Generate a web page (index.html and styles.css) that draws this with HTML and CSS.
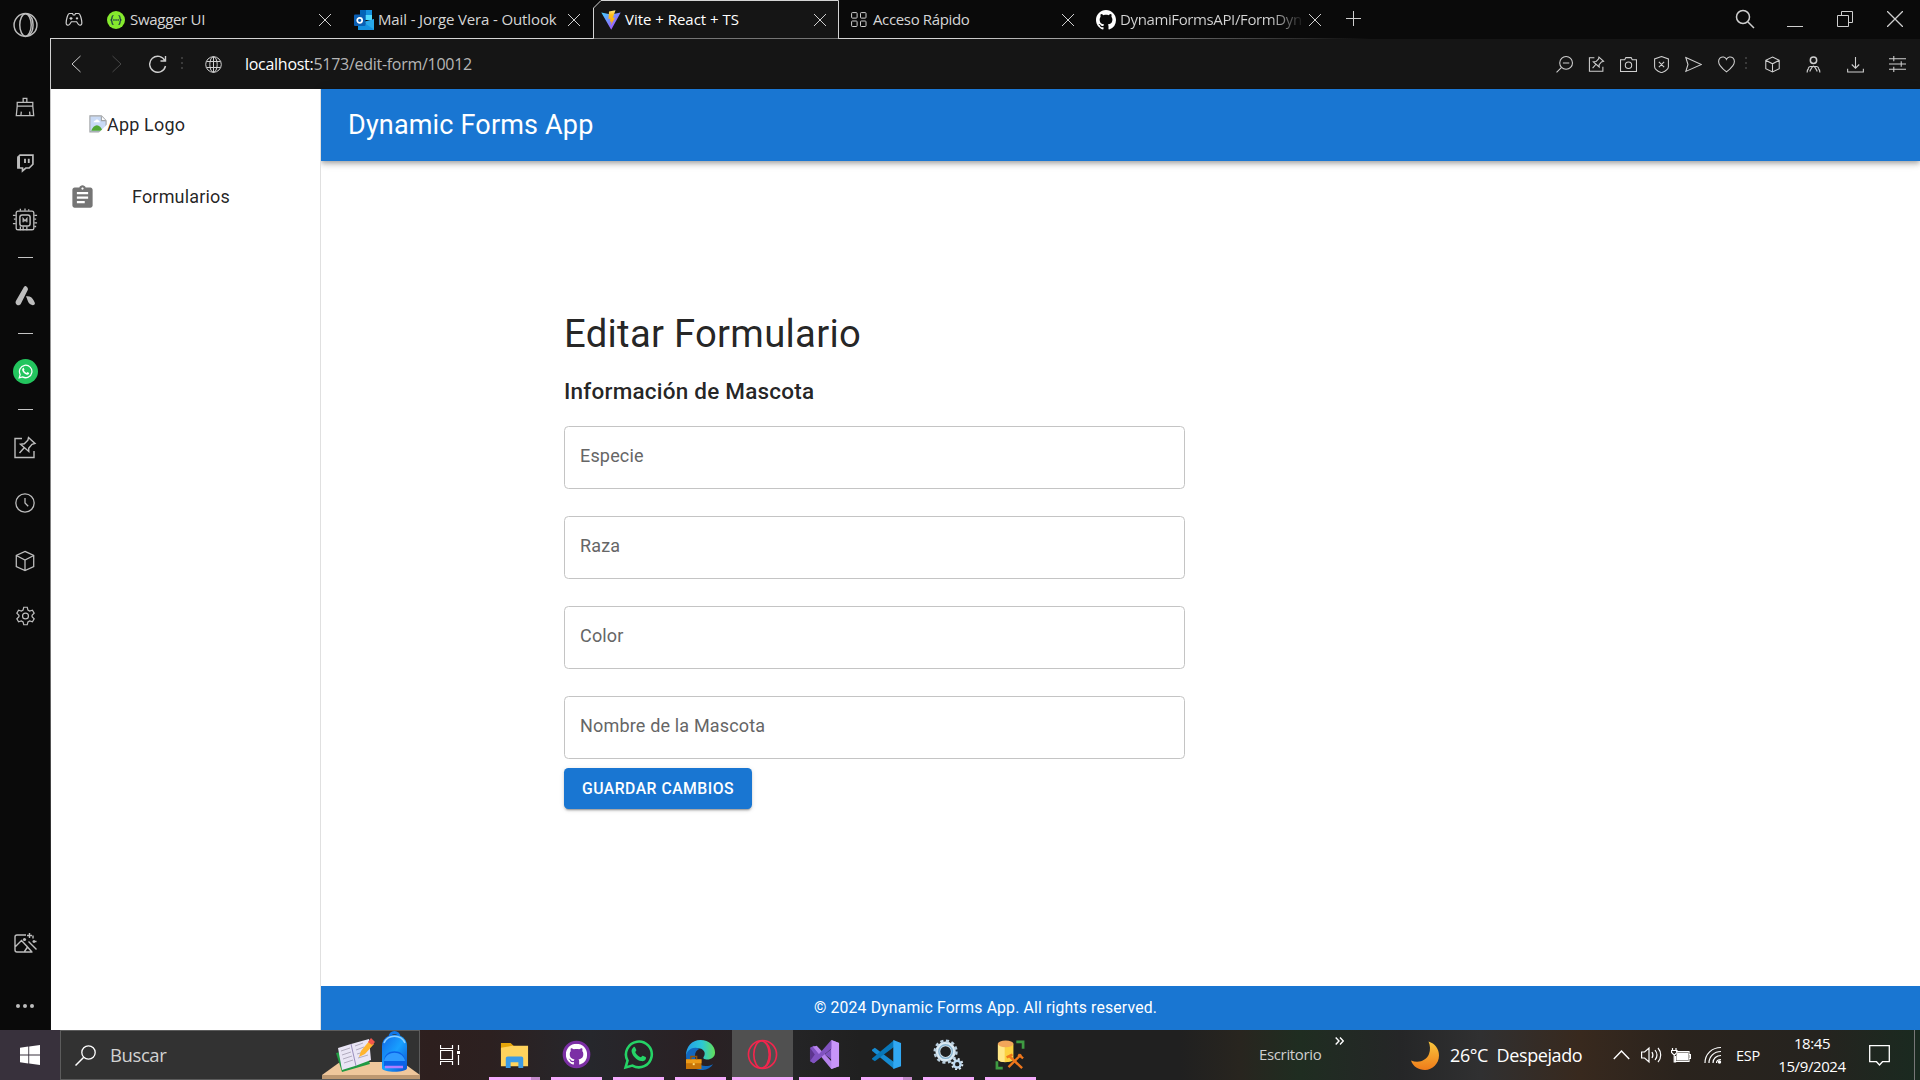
FILE: index.html
```html
<!DOCTYPE html>
<html lang="es">
<head>
<meta charset="utf-8">
<title>Vite + React + TS</title>
<link rel="stylesheet" href="styles.css">
</head>
<body>
<svg class="defs" aria-hidden="true">
  <symbol id="x" viewBox="0 0 14 14"><path d="M1 1l12 12M13 1L1 13"/></symbol>
  <symbol id="pin" viewBox="0 0 24 24"><path d="M9 2.500H2v19h19V15M15.500 1.500l6.500 6-3 .8-3.300 4 .1 3.200-8.300-7.300 3.800-.4 3.600-3.600zM11 12l-4.500 5"/></symbol>
  <symbol id="cube" viewBox="0 0 24 24"><path d="M12 1.500l9.500 4.500v12L12 22.500 2.500 18V6zM2.500 6L12 11l9.500-5M12 11v11.500"/></symbol>
  <symbol id="opera" viewBox="0 0 24 24"><circle cx="12" cy="12" r="11"/><ellipse cx="12" cy="12" rx="5.500" ry="10.800"/><path d="M14 1.500c7 3 7 18 0 21"/></symbol>
  <symbol id="wa" viewBox="0 0 24 24"><path d="M2 22l1.500-5.300A10 10 0 1 1 7.300 20.600z" fill="none" stroke="currentColor" stroke-width="2"/><path fill="currentColor" stroke="none" d="M8.100 6.300c.5-.4 1-.3 1.300.3l.9 2c.2.500-.6 1.200-.8 1.600.9 1.900 2.300 3.200 4.300 4 .5-.3 1-1.400 1.500-1.200l2.200 1c.5.300.4 1.100.1 1.700-.6 1.200-2.100 1.700-3.500 1.400-3.600-.8-6.500-3.700-7.400-7.100-.3-1.500.4-2.900 1.400-3.700z"/></symbol>
  <symbol id="gh" viewBox="0 0 16 16"><path fill="currentColor" stroke="none" d="M8 0C3.580 0 0 3.580 0 8c0 3.540 2.290 6.530 5.470 7.590.4.070.55-.17.55-.38 0-.19-.01-.82-.01-1.490-2.010.37-2.530-.49-2.690-.94-.09-.23-.48-.94-.82-1.130-.28-.15-.68-.52-.01-.53.63-.01 1.080.58 1.230.82.72 1.210 1.870.87 2.330.66.07-.52.28-.87.51-1.070-1.780-.2-3.640-.89-3.640-3.950 0-.87.31-1.590.82-2.150-.08-.2-.36-1.020.08-2.120 0 0 .67-.21 2.200.82.64-.18 1.320-.27 2-.27s1.360.09 2 .27c1.530-1.040 2.200-.82 2.200-.82.44 1.100.16 1.920.08 2.120.51.56.82 1.270.82 2.150 0 3.070-1.870 3.750-3.650 3.950.29.25.54.73.54 1.480 0 1.070-.01 1.930-.01 2.200 0 .21.15.46.55.38A8.010 8.010 0 0 0 16 8c0-4.420-3.580-8-8-8z"/></symbol>
</svg>

<div class="desktop">
  <div class="browser">
    <nav class="rail">
      <svg class="ri r-opera"><use href="#opera"/></svg>
      <svg class="ri r-brush" viewBox="0 0 24 24"><path d="M10 7V2.500h4V7M3.500 11V7h17v4M3.500 11h17l1 10.500h-19zM8 17l-.5 4.500M17 17l.5 4.500"/></svg>
      <svg class="ri r-twitch" viewBox="0 0 24 24"><path d="M4 4.500L6 2.500h15.500v11L17 18h-4l-4 3.500V18H3.500V6z" stroke-width="2"/><path d="M4.500 4v14" stroke-width="3"/><path d="M12 7v5M16.500 7v5" stroke-width="2.200"/></svg>
      <svg class="ri r-chip" viewBox="0 0 28 28"><rect x="4.500" y="4.500" width="19" height="20" rx="2"/><rect x="8.500" y="8.500" width="11" height="12" rx="2.500" stroke-width="1.600"/><path d="M12 16.500v-4l2 2.500 2-2.500v4M14 4V1.500M18 4V2.500M9 4V2M4 9H1M4 13H2M4 18H1M24 9h3M24 13h2M24 17h3M24 21h2M9 25v-4M12 25v-4M16 25v-4"/></svg>
      <span class="rline l1"></span>
      <svg class="ri r-a" viewBox="0 0 24 24"><path class="f" d="M13.500 1.500c1.400.9 2.200 2.500 1.500 4L7.500 20.500c-1 1.800-3 2-4.500 1s-1.600-2.800-.8-4.200l8-14c.8-1.700 2-2.600 3.300-1.800zM13 12.500c4-.8 6.800 1 8.500 4.300l1.200 2.500c.6 1.500-.8 2.700-2.200 2.700-3.500-.3-4.700-2.500-5.500-4.700-.6-1.800-1-3.300-2-4.800z"/></svg>
      <span class="rline l2"></span>
      <span class="ri r-wa"><svg width="15" height="15"><use href="#wa"/></svg></span>
      <span class="rline l3"></span>
      <svg class="ri r-pin"><use href="#pin"/></svg>
      <svg class="ri r-clock" viewBox="0 0 24 24"><circle cx="12" cy="12" r="10"/><path d="M12 6.500V12l3.500 3.500"/></svg>
      <svg class="ri r-cube"><use href="#cube"/></svg>
      <svg class="ri r-gear" viewBox="0 0 24 24"><circle cx="12" cy="12" r="3.400"/><path d="M10 2h4l.8 3.200 1.900 1.100 3.200-.9 2 3.400-2.400 2.300v1.800l2.400 2.300-2 3.400-3.200-.9-1.900 1.100L14 22h-4l-.8-3.200-1.900-1.100-3.200.9-2-3.400 2.400-2.300v-1.800L2.100 8.800l2-3.400 3.200.9 1.900-1.100z"/></svg>
      <svg class="ri r-img" viewBox="0 0 24 24"><path d="M13 3H4a2 2 0 0 0-2 2v13a2 2 0 0 0 2 2h15.500M2 15l6.500-6.500 7 7.500M11.500 19.500l3-4.500 4 4.500M15.500 9.500l8 8M16.500 1v5M14 3.500h5M21 8v3M19.500 9.500h4M20 3.500v3"/><circle class="f" cx="11.500" cy="7.500" r="1.600"/></svg>
      <svg class="ri r-dots" viewBox="0 0 24 24"><circle class="f" cx="5" cy="12" r="2"/><circle class="f" cx="12" cy="12" r="2"/><circle class="f" cx="19" cy="12" r="2"/></svg>
    </nav>

    <div class="window">
      <div class="tabs">
        <span class="gx"><svg width="18" height="15" viewBox="0 0 24 20"><path d="M7 2h3l1 2h2l1-2h4c2.500 0 4.500 9 4.500 12.500S19 18.500 17.500 16l-2-3h-7l-2 3C5 18.500 1.500 18 1.500 14.500S3.500 2 6 2z"/><path d="M8 6.500v4M6 8.500h4M16 7v3M14.500 8.500h3"/></svg></span>
        <div class="tab swagger">
          <svg class="s18" viewBox="0 0 18 18"><circle cx="9" cy="9" r="9" fill="#85ea2d" stroke="none"/><path d="M6.500 4.500C5 4.500 5 5 5 6.500S4.800 9 3.500 9C4.800 9 5 10 5 11.500s0 2 1.500 2M11.500 4.500c1.500 0 1.500.5 1.500 2S13.200 9 14.500 9C13.200 9 13 10 13 11.500s0 2-1.500 2" stroke="#173647" stroke-width="1.200"/><path d="M6.300 9h5.600" stroke="#173647" stroke-width="1.400" stroke-dasharray="1.300 .8"/></svg>
          <span class="title t1">Swagger UI</span><svg class="close"><use href="#x"/></svg>
        </div>
        <div class="tab">
          <svg class="s20" viewBox="0 0 20 20" stroke="none"><path d="M6 0h12v10H6z" fill="#28a8ea"/><path d="M6 0h6v5H6z" fill="#0364b8"/><path d="M12 0h6v5h-6z" fill="#1490df"/><path d="M12 5h6v5h-6z" fill="#50d9ff"/><path d="M4 9l8 5 8-5v11H4z" fill="#1490df"/><path d="M20 9v10.500L9 12z" fill="#28a8ea"/><rect y="4.500" width="11.500" height="11.500" rx="1" fill="#0a5fb4"/><circle cx="5.700" cy="10.300" r="2.500" fill="none" stroke="#fff" stroke-width="1.700"/></svg>
          <span class="title t2">Mail - Jorge Vera - Outlook</span><svg class="close"><use href="#x"/></svg>
        </div>
        <div class="tab active">
          <svg class="edge" viewBox="0 0 246 39" width="246" height="39"><path d="M0 38.500H.5V8L8 .5H245.500V38.500H246" fill="#151515" stroke="#d4d4d4"/></svg>
          <svg class="s20" viewBox="0 0 20 20" stroke="none"><defs><linearGradient id="va" x2="1" y2="1"><stop stop-color="#41d1ff"/><stop offset="1" stop-color="#bd34fe"/></linearGradient><linearGradient id="vb" x2="0" y2="1"><stop stop-color="#ffea83"/><stop offset=".3" stop-color="#ffbd1a"/><stop offset="1" stop-color="#ffa800"/></linearGradient></defs><path d="M.3 2.500L10 4.500l9.700-2L10.200 19.700z" fill="url(#va)"/><path d="M14.500.2L8 1.400 7.500 9l2-.4-.6 3.300 1.800-.6-.9 4.200 4.300-8-2.300.5z" fill="url(#vb)"/></svg>
          <span class="title t3">Vite + React + TS</span><svg class="close"><use href="#x"/></svg>
        </div>
        <div class="tab quick">
          <svg class="s16" viewBox="0 0 16 16"><rect x=".6" y=".6" width="5.500" height="5.500" rx=".8"/><rect x="9.500" y=".6" width="5.500" height="5.500" rx=".8"/><rect x=".6" y="9" width="5.500" height="5.500" rx=".8"/><rect x="9.500" y="9" width="5.500" height="5.500" rx=".8"/></svg>
          <span class="title t4">Acceso Rápido</span><svg class="close"><use href="#x"/></svg>
        </div>
        <div class="tab repo">
          <svg class="s20 white"><use href="#gh"/></svg>
          <span class="title t5">DynamiFormsAPI/FormDyn</span><svg class="close"><use href="#x"/></svg>
        </div>
        <span class="plus"><svg width="15" height="15" viewBox="0 0 15 15"><path d="M7.500 0v15M0 7.500h15"/></svg></span>
        <span class="wc"><svg width="20" height="20" viewBox="0 0 20 20"><circle cx="8" cy="8" r="6.500" stroke-width="1.500"/><path d="M13 13l6 6" stroke-width="1.500"/></svg></span>
        <span class="wc"><svg width="16" height="16" viewBox="0 0 16 16"><path d="M0 15.500h16"/></svg></span>
        <span class="wc"><svg width="16" height="16" viewBox="0 0 16 16"><path d="M4.500 4V.5h11v11H12M.5 4.500h11v11H.5z"/></svg></span>
        <span class="wc"><svg width="16" height="16" viewBox="0 0 16 16"><path d="M0 0l16 16M16 0L0 16" stroke-width="1.300"/></svg></span>
      </div>

      <div class="toolbar">
        <span class="tb"><svg width="10" height="18" viewBox="0 0 10 18"><path d="M9.500 1L1 9l8.500 8"/></svg></span>
        <span class="tb dim"><svg width="10" height="18" viewBox="0 0 10 18"><path d="M.5 1L9 9 .5 17"/></svg></span>
        <span class="tb"><svg width="18" height="18" viewBox="0 0 18 18"><path d="M16.500 11a8 8 0 1 1-.5-5M16.500 1v5h-5" stroke-width="1.400"/></svg></span>
        <span class="sep"></span>
        <span class="globe"><svg width="17" height="17" viewBox="0 0 17 17"><circle cx="8.500" cy="8.500" r="7.800"/><ellipse cx="8.500" cy="8.500" rx="3.700" ry="7.800"/><path d="M1.500 5.500h14M1.500 11.500h14M8.500 1v15"/></svg></span>
        <span class="url"><b>localhost:</b>5173/edit-form/10012</span>
        <span class="ta"><svg viewBox="0 0 16 16"><circle cx="9.500" cy="6.500" r="6"/><path d="M6.500 6.500h6M5 11L.5 15.500"/></svg></span>
        <span class="ta bold"><svg><use href="#pin"/></svg></span>
        <span class="ta"><svg viewBox="0 0 16 16"><path d="M.5 3.500h4l1-2h5l1 2h4v11H.5z"/><circle cx="8" cy="8.700" r="3"/></svg></span>
        <span class="ta"><svg viewBox="0 0 16 16"><path d="M8 .5l6.500 2.300V10c0 2.500-3.500 4.500-6.500 5.700C5 14.500 1.500 12.500 1.500 10V2.800zM5.500 5.500l5 5M10.500 5.500l-5 5"/></svg></span>
        <span class="ta"><svg viewBox="0 0 16 16"><path d="M.8 1.500L15.500 8 .8 14.500l2-6.500z"/></svg></span>
        <span class="ta"><svg viewBox="0 0 16 16"><path d="M8 3.200C9 .8 12 .2 14 1.800c2 1.800 1.800 5 0 7.200-1.500 2-4 4.500-6 6-2-1.500-4.500-4-6-6C.2 6.800 0 3.600 2 1.800 4 .2 7 .8 8 3.200z"/></svg></span>
        <span class="sep end"></span>
        <span class="tc bold"><svg><use href="#cube"/></svg></span>
        <span class="tc"><svg viewBox="0 0 16 16"><circle cx="8" cy="4" r="3" stroke-width="1.400"/><path d="M2 15.500c0-1.500.5-3 1.500-4M14 15.500c0-1.500-.5-3-1.500-4M4.500 14.500c1.500-3 2-4.500 3.500-5 1.500.5 2 2 3.500 5M3 11c2-2 8-2 10 0" stroke-width="1.100"/></svg></span>
        <span class="tc"><svg viewBox="0 0 16 16"><path d="M8 1v10.500M4.500 8L8 11.500 11.500 8M.6 12v3h14.800v-3"/></svg></span>
        <span class="tc"><svg viewBox="0 0 16 16"><path d="M0 2.500h16M0 7.500h16M0 12.500h16M4.500 0v5M11.500 5v5M4.500 10v5"/></svg></span>
      </div>

      <div class="app">
        <aside class="drawer">
          <div class="logo"><svg width="18" height="18" viewBox="0 0 16 16"><path d="M1 1h10l4 4v10H1z" fill="#c9daf5"/><path d="M2 14c1-3 3-5 5-5s4 2 5 5z" fill="#52a833"/><path d="M4 6.500c0-1 .8-1.500 1.500-1.500C6 3.500 8.500 3.500 9 5.500c1 0 1 1 1 1z" fill="#fff"/><path d="M.8 15V.8H11L15.200 5v10z" fill="none" stroke="#a0a3a6"/><path d="M11 1v4h4" fill="#fff" stroke="#a0a3a6"/><path d="M16 8.500L8.500 16H16z" fill="#fff"/></svg><span>App Logo</span></div>
          <div class="item"><svg width="27" height="27" viewBox="0 0 24 24"><path fill="#757575" d="M19 3h-4.180C14.400 1.840 13.300 1 12 1c-1.300 0-2.400.84-2.820 2H5c-1.100 0-2 .9-2 2v14c0 1.100.9 2 2 2h14c1.100 0 2-.9 2-2V5c0-1.100-.9-2-2-2zm-7 0c.55 0 1 .45 1 1s-.45 1-1 1-1-.45-1-1 .45-1 1-1zm2 14H7v-2h7v2zm3-4H7v-2h10v2zm0-4H7V7h10v2z"/></svg><span>Formularios</span></div>
        </aside>
        <div class="page">
          <header class="appbar">Dynamic Forms App</header>
          <main class="content">
            <form class="form">
              <h1>Editar Formulario</h1>
              <h2>Información de Mascota</h2>
              <div class="field">Especie</div>
              <div class="field">Raza</div>
              <div class="field">Color</div>
              <div class="field">Nombre de la Mascota</div>
              <button type="button" class="save">GUARDAR CAMBIOS</button>
            </form>
          </main>
          <footer class="footer">© 2024 Dynamic Forms App. All rights reserved.</footer>
        </div>
      </div>
    </div>
  </div>

  <div class="taskbar">
    <span class="start"><svg width="20" height="20" viewBox="0 0 20 20"><path fill="#fff" d="M0 2.700L8.300 1.500v8H0zM9.200 1.400L20 0v9.500H9.200zM0 10.400h8.300v8L0 17.300zM9.200 10.400H20V20L9.200 18.600z"/></svg></span>
    <div class="search">
      <svg class="mag" width="21" height="21" viewBox="0 0 21 21"><circle cx="13.500" cy="7.500" r="6.700"/><path d="M8.500 12.500L.5 20.500" stroke-width="1.500"/></svg>
      <span class="hint">Buscar</span>
      <svg class="art" width="98" height="48" viewBox="0 0 98 48"><defs><linearGradient id="bp" x2="1" y2="1"><stop stop-color="#1268e8"/><stop offset=".5" stop-color="#18a0ff"/><stop offset="1" stop-color="#0a4fd0"/></linearGradient></defs><path d="M18 31h62l18 13H0z" fill="#efc79c"/><path d="M0 44h98v4H0z" fill="#bd9871"/><path d="M14 22l6 19 28-8-6-17z" fill="#219a43"/><path d="M16 17l13-4 18-5 2 21-16 6-13 4z" fill="#e9e5f5"/><path d="M29 13l5 22" stroke="#9a8fbd"/><path d="M19 20l9-3M20 24l9-3M21 28l9-3M22 32l9-3M33 15l8-3M34 19l8-3M35 23l10-3M36 27l10-3" stroke="#aaa5b8" stroke-width=".9"/><path d="M37 26l2-6 9-11 4 4-9 10z" fill="#ffb52e"/><path d="M46 11l3-4 4 4-3 3z" fill="#f2574c"/><path d="M68 6c0-6 9-6 9 0" stroke="#1277e8" stroke-width="3" fill="none"/><path d="M60 37V15c0-15 25-15 25 0v22c0 5-25 5-25 0z" fill="url(#bp)"/><path d="M62 12c4-9 17-9 21 0" fill="none" stroke="#8fd0ff" stroke-width="1.500"/><path d="M62 35v-5c0-13 21-13 21 0v5z" fill="#0b62e8"/><path d="M62 30c2-11 19-11 21 0z" fill="#2f9bff"/><path d="M63 36h18" stroke="#b07cff" stroke-width="2.500"/></svg>
    </div>
    <span class="view"><svg width="20" height="20" viewBox="0 0 20 20"><path d="M.5 0v3.500h12V0M.5 5.500h12v9H.5zM.5 20v-3.500h12V20M18.500 0v5M18.500 10v10" stroke="#fff" stroke-width="1.200"/><path d="M17 6h3v3h-3z" fill="#fff"/></svg></span>
    <div class="apps">
      <span class="ap stack"><svg viewBox="0 0 32 32"><path d="M2 4h10l3 3v6H2z" fill="#e5a50a"/><path d="M2 9l12-2h16v21H2z" fill="#ffd35c"/><path d="M7 30V20c0-1 .7-2 2-2h14c1.300 0 2 1 2 2v10h-5v-6h-8v6z" fill="#3b9be6"/></svg></span>
      <span class="ap"><svg viewBox="0 0 32 32"><circle cx="16" cy="16" r="14.300" fill="#7c2fa5"/><g color="#fff"><use href="#gh" x="5" y="5" width="22" height="22"/></g></svg></span>
      <span class="ap"><svg viewBox="0 0 32 32" class="green"><use href="#wa"/></svg></span>
      <span class="ap"><svg viewBox="0 0 32 32"><defs><linearGradient id="ea"><stop stop-color="#249ce8"/><stop offset=".55" stop-color="#2cc7d5"/><stop offset="1" stop-color="#63df58"/></linearGradient></defs><path d="M1 17C1 8 7 1 16 1s15 6 15 13c0 6-6 8-10 7-3-1-2-2-1-4 2-5-4-9-9-7-5 1-8 4-10 7z" fill="url(#ea)"/><path d="M1 17c1-6 8-10 14-7-5 2-6 8-3 13 4 6 11 6 17 3-4 6-13 8-20 4C4 28 1 23 1 17z" fill="#1267bd"/><path d="M1 21h16v10H1z" fill="#c87508"/><path d="M1 21h16v4H1z" fill="#ed9b17"/><path d="M6 21v-3h6v3" fill="none" stroke="#915408" stroke-width="1.500"/><path d="M8 25h2v2H8z" fill="#ffe178"/></svg></span>
      <span class="ap cur"><svg viewBox="0 0 32 32" class="red"><circle cx="16" cy="16" r="14.500"/><ellipse cx="15" cy="16" rx="8" ry="14"/><path d="M18 3c8 4 8 22 0 26"/></svg></span>
      <span class="ap"><svg viewBox="0 0 32 32"><path d="M1 9l4-2 19 15V9.500L5 25l-4-2z" fill="#8052c0"/><path d="M1 9l5 7-5 7z" fill="#5d358f"/><path d="M23 1l8 3v24l-8 3L4 8l4-1 15 16z" fill="#b683ed"/><path d="M23 1l8 3v24l-8 3z" fill="#c894fa"/><path d="M23 1v9L5 25l-2-1z" fill="#8052c0"/></svg></span>
      <span class="ap stack"><svg viewBox="0 0 32 32"><path d="M1 11l3-2 20 15v7L1 12z" fill="#168bd2"/><path d="M1 21l3 2L24 8V1L1 20z" fill="#0877b9"/><path d="M23 1l8 3v24l-8 3z" fill="#31a8f3"/></svg></span>
      <span class="ap"><svg viewBox="0 0 32 32"><g fill="none"><circle cx="13" cy="13" r="8" stroke="#dceaf3" stroke-width="5"/><circle cx="13" cy="13" r="11" stroke="#b9cedd" stroke-width="3" stroke-dasharray="3.200 2.560"/><circle cx="13" cy="13" r="7" stroke="#89b4cf" stroke-width="1.500"/><circle cx="25" cy="26" r="3.500" stroke="#bdd9f0" stroke-width="2.500"/><circle cx="25" cy="26" r="5.300" stroke="#d8e8f4" stroke-width="2" stroke-dasharray="2 2.160"/></g></svg></span>
      <span class="ap"><svg viewBox="0 0 32 32"><path d="M3 5v16c0 4 16 4 16 0V5z" fill="#fcd13f"/><path d="M3 5v16c0 1.500 3 3 7 3V6z" fill="#ffe787"/><ellipse cx="11" cy="5" rx="8" ry="3.500" fill="#f2a65a"/><path d="M22 3h7v7M8 30H2v-7" fill="none" stroke="#3e9b42" stroke-width="2.800"/><path d="M14 29l13-13M14 17l14 13M12 19l6-3M24 16l5 4" fill="none" stroke="#ef761b" stroke-width="2.500"/></svg></span>
    </div>
    <div class="tray">
      <span class="desk">Escritorio</span><span class="more"><svg width="9" height="8" viewBox="0 0 9 8"><path d="M.7.5L4 4 .7 7.500M5 .5L8.300 4 5 7.500" stroke-width="1.400"/></svg></span>
      <svg class="moon" width="28" height="29" viewBox="0 0 28 29"><defs><linearGradient id="mo" x2="0" y2="1"><stop stop-color="#f8c63d"/><stop offset="1" stop-color="#ef7b1a"/></linearGradient></defs><path fill="url(#mo)" stroke="none" d="M17.500.5C24 2.500 28 8 28 14.500 28 22.500 21.500 29 14 29 7.500 29 2 25.500 0 19.500 8 22.500 15.500 19.500 18 13c1.500-4 1.300-8.500-.5-12.500z"/></svg>
      <span class="temp">26°C&nbsp; Despejado</span>
      <svg class="chev" width="17" height="10" viewBox="0 0 17 10"><path d="M.8 9l7.700-8 7.700 8" stroke-width="1.400"/></svg>
      <svg class="vol" width="21" height="18" viewBox="0 0 21 18"><path d="M.6 6h3L8 2v14l-4.400-4h-3zM11 6c1.200 2 1.200 4 0 6M14 4c2.400 3 2.400 7 0 10M17 2c3.600 4 3.600 10 0 14"/></svg>
      <svg class="bat" width="20" height="15" viewBox="0 0 20 15"><path d="M5 3.500h13v10H4.500V8M18.500 6.500h1v4h-1M1.500 0v2M5 0v2M.5 2.500h5.500v2L4 6.500H2.500L.5 4.500zM3.200 6v8h2"/><path d="M7 5h9.500v7H6V7z" fill="#fff"/></svg>
      <svg class="wifi" width="18" height="18" viewBox="0 0 18 18"><path d="M1 17C1 8 8 1.500 17 1.500M5 17C5 10.500 10 5.500 17 5.500M9 17c0-4.500 3.500-7.500 8-7.500M12.500 17c0-2 1.500-3.500 4.500-3.500"/><circle cx="15.500" cy="16" r="1.700" fill="#fff" stroke="none"/></svg>
      <span class="lang">ESP</span>
      <span class="clock"><span class="time">18:45</span><span class="date">15/9/2024</span></span>
      <svg class="note" width="21" height="21" viewBox="0 0 21 21"><path d="M.7.700h19.600v16H13.500l-3 3.300-3-3.300H.7z" stroke-width="1.300"/></svg>
      <span class="peek"></span>
    </div>
  </div>
</div>
</body>
</html>
```
FILE: styles.css
```css
* { box-sizing: border-box; }
body { margin: 0; background: #0a0a0a; overflow: hidden; }
svg { display: block; flex: none; }
.defs { position: absolute; width: 0; height: 0; }

.desktop { width: 1920px; height: 1080px; display: flex; flex-direction: column; }
.browser { height: 1030px; display: flex; font-family: "Open Sans", "Noto Sans", sans-serif; }

/* Opera side rail */
.rail { width: 50px; display: flex; flex-direction: column; align-items: center; padding: 11px 0 10px; background: #0a0a0a; color: #bdbdbd; }
.ri { width: 22px; height: 28px; flex: none; fill: none; stroke: #bdbdbd; stroke-width: 1.400; }
.f { fill: #bdbdbd; stroke: none; }
.r-opera { width: 25px; }
.r-brush { margin-top: 54px; }
.r-twitch { width: 20px; margin-top: 28px; }
.r-chip { width: 26px; margin-top: 29px; }
.r-a { margin-top: 24px; }
.r-wa { width: 25px; height: 25px; margin: 25px 0 1px; border-radius: 50%; background: #23c55e; display: flex; align-items: center; justify-content: center; color: #fff; }
.r-pin { margin-top: 24px; width: 24px; }
.r-clock { margin-top: 27px; }
.r-cube { margin-top: 30px; }
.r-gear { margin-top: 27px; width: 21px; }
.r-img { margin-top: auto; width: 24px; }
.r-dots { margin-top: 34px; width: 24px; }
.rline { width: 15px; height: 1px; background: #c4c4c4; flex: none; }
.l1 { margin: 23px 0 0; }
.l2 { margin-top: 23px; }
.l3 { margin-top: 24px; }

.window { flex: 1; min-width: 0; display: flex; flex-direction: column; padding-left: 1px; background: linear-gradient(#0a0a0a 38px, #d4d4d4 38px, #8a8a8a 400px, #777 640px, #111 920px) left / 1px 100% no-repeat; }

/* tab strip */
.tabs { height: 39px; display: flex; align-items: center; background: linear-gradient(90deg, #d4d4d4 900px, rgba(212,212,212,0) 1320px) bottom / 100% 1px no-repeat #0a0a0a; }
.tabs svg, .toolbar svg { fill: none; stroke: #cfcfcf; stroke-width: 1; }
.tabs .tab svg[stroke="none"] { stroke: none; }
.gx { width: 46px; display: flex; justify-content: center; }
.gx svg { stroke-width: 1.600; }
.tab { width: 248px; height: 39px; display: flex; align-items: center; padding: 0 9px 0 10px; gap: 4px; position: relative; color: #d6d6d6; font-size: 15px; }
.tab.swagger { width: 247px; gap: 5px; }
.tab:nth-child(3) { width: 249px; }
.tab.active { width: 246px; padding-left: 8px; color: #fff; }
.tab.active > * { position: relative; }
.tab.active .edge { position: absolute; left: 0; top: 0; }
.tab.quick { padding-left: 12px; gap: 6px; }
.tab.repo { width: 247px; padding-left: 9px; }
.s16 { width: 16px; height: 16px; }
.s18 { width: 18px; height: 18px; }
.s20 { width: 20px; height: 20px; }
.white { color: #fff; }
.title { flex: 1; min-width: 0; white-space: nowrap; line-height: 22px; padding-bottom: 2px; }
.t1 { letter-spacing: -.3px; }
.t2 { letter-spacing: -.13px; }
.t3 { letter-spacing: -.02px; }
.t4 { letter-spacing: -.36px; }
.t5 { letter-spacing: -.38px; background: linear-gradient(90deg, #d6d6d6 150px, #1a1a1a 182px); -webkit-background-clip: text; background-clip: text; color: transparent; }
.close { width: 20px; height: 14px; }
.plus { width: 38px; display: flex; justify-content: center; margin-right: auto; padding-bottom: 3px; }
.wc { width: 50px; display: flex; justify-content: center; padding-bottom: 1px; }

/* address bar */
.toolbar { height: 50px; display: flex; align-items: center; background: #151515; padding: 0 2px 0 4px; }
.tb { width: 41px; display: flex; justify-content: center; }
.toolbar .dim svg { stroke: #484848; }
.sep { width: 2px; height: 14px; margin: 0 22px 0 3px; background: repeating-linear-gradient(#3a3a3a 0 2px, transparent 2px 5px); }
.sep.end { margin: 0 4px 0 3px; }
.globe { width: 18px; }
.url { margin-left: 22px; margin-right: auto; color: #b5b5b5; font-size: 16px; letter-spacing: -.28px; white-space: nowrap; }
.url b { color: #fff; font-weight: 400; }
.ta, .tc { display: flex; justify-content: center; width: 32.400px; }
.tc { width: 41.700px; }
.ta svg, .tc svg { width: 17px; height: 17px; }
.toolbar .bold svg { stroke-width: 1.500; }

/* web application, Roboto at 112.5% */
.app { flex: 1; min-height: 0; display: flex; background: #fff; font-family: Roboto, "Open Sans", sans-serif; color: rgba(0,0,0,.87); }
.drawer { width: 270px; border-right: 1px solid #e0e0e0; background: #fff; font-size: 18px; line-height: 27px; letter-spacing: .17px; position: relative; z-index: 2; }
.logo { display: flex; align-items: center; height: 72px; padding-left: 38px; }
.logo svg { margin-bottom: 3px; }
.drawer span { padding-bottom: 2px; }
.item { display: flex; align-items: center; height: 54px; margin-top: 9px; padding-left: 18px; gap: 36px; }
.page { flex: 1; min-width: 0; display: flex; flex-direction: column; }
.appbar { height: 72px; padding-left: 27px; display: flex; align-items: center; background: #1976d2; color: #fff; font-size: 27px; letter-spacing: .17px; box-shadow: 0 2px 4px -1px rgba(0,0,0,.2), 0 4px 5px rgba(0,0,0,.14), 0 1px 10px rgba(0,0,0,.12); z-index: 1; }
.content { flex: 1; padding: 150px 0 0 243px; }
.form { width: 621px; display: flex; flex-direction: column; align-items: stretch; }
h1 { margin: 0; font-size: 38.250px; line-height: 47px; font-weight: 400; letter-spacing: .28px; }
h2 { margin: 15px 0 17px; font-size: 22.500px; line-height: 36px; font-weight: 500; letter-spacing: .22px; }
.field { height: 63px; margin-bottom: 27px; padding: 16px 15px; border: 1px solid #c4c4c4; border-radius: 4.500px; font-size: 18px; line-height: 26px; letter-spacing: .17px; color: #666; }
.save { align-self: flex-start; width: 188px; height: 41px; margin-top: -18px; padding: 1px 0 0; border: 0; border-radius: 4.500px; background: #1976d2; color: #fff; font: 500 15.750px/28px Roboto, sans-serif; letter-spacing: .47px; box-shadow: 0 3px 1px -2px rgba(0,0,0,.2), 0 2px 2px rgba(0,0,0,.14), 0 1px 5px rgba(0,0,0,.12); }
.footer { height: 44px; padding: 0 270px 2px 0; display: flex; align-items: center; justify-content: center; background: #1976d2; color: #fff; font-size: 15.750px; letter-spacing: .17px; }

/* Windows taskbar */
.taskbar { height: 50px; display: flex; font-family: "Open Sans", "Noto Sans", sans-serif; color: #fff; background: linear-gradient(90deg, #38313c 0, #38313c 60px, #2d1f1e 430px, #2c2020 490px, #26272c 590px, #2a2023 700px, #252527 780px, #202020 860px, #202020 1180px, #28251f 1240px, #1f2d21 1300px, #252627 1400px, #303031 1480px, #38291e 1580px, #2a231d 1680px, #25231f 1820px, #1a2a20 1919px); }
.start { width: 60px; display: flex; align-items: center; justify-content: center; }
.search { width: 360px; display: flex; align-items: center; border: 1px solid #5c5c5c; background: #323232; padding-left: 14px; }
.mag { fill: none; stroke: #fff; stroke-width: 1.300; }
.hint { margin-left: 14px; padding-bottom: 2px; color: #d2d2d2; font-size: 18.500px; letter-spacing: -.4px; }
.art { margin: 0 -1px 0 auto; }
.view { width: 60px; display: flex; align-items: center; justify-content: center; padding-bottom: 1px; }
.view svg { fill: none; }
.apps { display: flex; padding-left: 9px; gap: 11px; }
.ap { width: 51px; display: flex; align-items: center; justify-content: center; border-bottom: 3px solid #f5abfc; padding: 2px 1px 0 0; }
.ap svg { width: 31px; height: 31px; }
.ap.stack { border-image: linear-gradient(90deg, #f5abfc 40px, #c58aca 40px) 3; border-image-width: 0 0 3px; }
.ap.cur { width: 61px; margin: 0 -5px; background: #505050; }
.green { color: #25d366; }
.red { fill: none; stroke: #f2264d; stroke-width: 1.700; }
.tray { margin-left: auto; display: flex; align-items: center; white-space: nowrap; }
.tray svg { fill: none; stroke: #fff; stroke-width: 1.200; }
.desk { width: 76px; padding-bottom: 2px; color: #cfcfcf; font-size: 15px; letter-spacing: -.35px; }
.more { width: 76px; align-self: flex-start; padding-top: 7px; }
.tray svg.moon { stroke: none; }
.temp { width: 174px; padding: 0 0 1px 11px; font-size: 18px; letter-spacing: -.4px; }
.chev { margin-right: 11px; }
.vol { margin-right: 9px; }
.bat { margin-right: 13px; }
.wifi { margin-right: 14px; }
.lang { width: 40px; font-size: 14.500px; letter-spacing: -.3px; }
.clock { width: 72px; display: flex; flex-direction: column; align-items: center; font-size: 15px; line-height: 23px; letter-spacing: -.4px; }
.note { margin: 0 24px 0 21px; }
.peek { width: 1px; height: 50px; margin-right: 5px; background: #777; }
```
